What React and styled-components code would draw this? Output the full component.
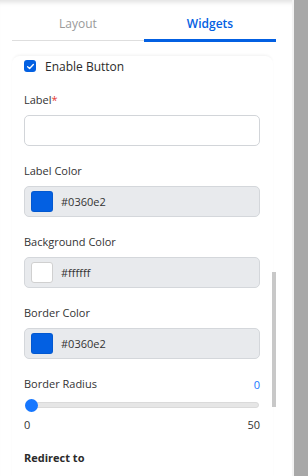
import React from 'react';
import styled, { createGlobalStyle } from 'styled-components';

const GlobalStyle = createGlobalStyle`
  html, body {
    margin: 0;
    padding: 0;
    background: #ffffff;
  }
  body {
    font-family: 'Open Sans', 'Noto Sans', sans-serif;
    color: #333333;
  }
`;

const colorFields = [
  { label: 'Label Color', value: '#0360e2' },
  { label: 'Background Color', value: '#ffffff' },
  { label: 'Border Color', value: '#0360e2' },
];

const App = () => {
  return (
    <Page>
      <GlobalStyle />
      <Panel>
        <Tabs>
          <Tab>Layout</Tab>
          <Tab active>Widgets</Tab>
        </Tabs>

        <Body>
          <Card>
            <CheckRow>
              <CheckBox>
                <svg width="9" height="9" viewBox="0 0 10 10" fill="none">
                  <path d="M1.8 5.2 L4 7.2 L8.2 2.8" stroke="#fff" strokeWidth="1.5" strokeLinecap="round" strokeLinejoin="round" />
                </svg>
              </CheckBox>
              <span>Enable Button</span>
            </CheckRow>

            <Field first>
              <Label>Label<Required>*</Required></Label>
              <TextInput />
            </Field>

            {colorFields.map((f) => (
              <Field key={f.label}>
                <Label>{f.label}</Label>
                <ColorInput>
                  <Swatch color={f.value} />
                  <span>{f.value}</span>
                </ColorInput>
              </Field>
            ))}

            <Field>
              <SliderHead>
                <Label>Border Radius</Label>
                <Value>0</Value>
              </SliderHead>
              <Track>
                <Thumb />
              </Track>
              <Range>
                <span>0</span>
                <span>50</span>
              </Range>
            </Field>

            <Section>Redirect to</Section>
          </Card>
          <ScrollThumb />
        </Body>
      </Panel>
      <Gutter />
    </Page>
  );
};

export default App;

const Page = styled.div`
  display: flex;
  height: 476px;
  overflow: hidden;
`;

const Panel = styled.div`
  flex: 1;
  background: #ffffff;
  box-shadow: inset 0 6px 5px -4px rgba(0, 0, 0, 0.13);
  padding: 0 16px 0 12px;
`;

const Gutter = styled.div`
  width: 14px;
  background: #a8a8a8;
  border-left: 2px solid #f3f3f3;
`;

const Tabs = styled.div`
  display: flex;
  border-bottom: 1px solid #dedede;
  height: 40px;
`;

const Tab = styled.div`
  flex: 1;
  display: flex;
  align-items: center;
  justify-content: center;
  padding-top: 8px;
  font-size: 12px;
  font-weight: ${(p) => (p.active ? 600 : 400)};
  color: ${(p) => (p.active ? '#0360e2' : '#9a9a9a')};
  border-bottom: 3px solid ${(p) => (p.active ? '#0360e2' : 'transparent')};
  margin-bottom: -2px;
`;

const Body = styled.div`
  position: relative;
  padding-top: 15px;
`;

const ScrollThumb = styled.div`
  position: absolute;
  right: 0;
  top: 231px;
  width: 4px;
  height: 135px;
  background: #c8c8c8;
`;

const Card = styled.div`
  margin-right: 3px;
  padding: 2px 12px 20px;
  border-radius: 8px;
  box-shadow: 0 -2px 3px -1px rgba(0, 0, 0, 0.06);
  display: flex;
  flex-direction: column;
  gap: 17px;
`;

const CheckRow = styled.label`
  display: flex;
  align-items: center;
  gap: 9px;
  height: 16px;
  font-size: 12px;
  color: #2b2b2b;
`;

const CheckBox = styled.span`
  width: 12px;
  height: 12px;
  border-radius: 3px;
  background: #0360e2;
  display: flex;
  align-items: center;
  justify-content: center;
`;

const Field = styled.div`
  display: flex;
  flex-direction: column;
  margin-top: ${(p) => (p.first ? '1px' : '0')};
`;

const Label = styled.div`
  font-size: 11px;
  line-height: 16px;
  color: #333333;
`;

const Required = styled.span`
  color: #e53935;
`;

const TextInput = styled.input`
  margin-top: 7px;
  box-sizing: border-box;
  width: 236px;
  height: 31px;
  border: 1px solid #d2d5d9;
  border-radius: 5px;
  background: #ffffff;
  outline: none;
`;

const ColorInput = styled.div`
  margin-top: 7px;
  box-sizing: border-box;
  width: 236px;
  height: 31px;
  border: 1px solid #d4d7db;
  border-radius: 5px;
  background: #e8eaed;
  display: flex;
  align-items: center;
  gap: 8px;
  padding-left: 6px;
  font-size: 11px;
  color: #333333;
`;

const Swatch = styled.span`
  box-sizing: border-box;
  width: 22px;
  height: 21px;
  border-radius: 3px;
  background: ${(p) => p.color};
  border: 1px solid ${(p) => (p.color === '#ffffff' ? '#d0d0d0' : 'rgba(0,0,0,0.08)')};
`;

const SliderHead = styled.div`
  display: flex;
  justify-content: space-between;
  align-items: flex-end;
  width: 236px;
`;

const Value = styled.div`
  font-size: 11px;
  line-height: 14px;
  color: #1677ff;
`;

const Track = styled.div`
  position: relative;
  margin-top: 10px;
  margin-left: 1px;
  box-sizing: border-box;
  width: 234px;
  height: 6px;
  border-radius: 3px;
  background: #e6e6e6;
  border: 1px solid #dadada;
`;

const Thumb = styled.div`
  position: absolute;
  left: -1px;
  top: 50%;
  width: 13px;
  height: 13px;
  margin-top: -6.5px;
  border-radius: 50%;
  background: #1677ff;
`;

const Range = styled.div`
  display: flex;
  justify-content: space-between;
  width: 236px;
  margin-top: 9px;
  font-size: 11px;
  line-height: 16px;
  color: #333333;
`;

const Section = styled.div`
  font-size: 11px;
  font-weight: 700;
  line-height: 16px;
  color: #2b2b2b;
`;
